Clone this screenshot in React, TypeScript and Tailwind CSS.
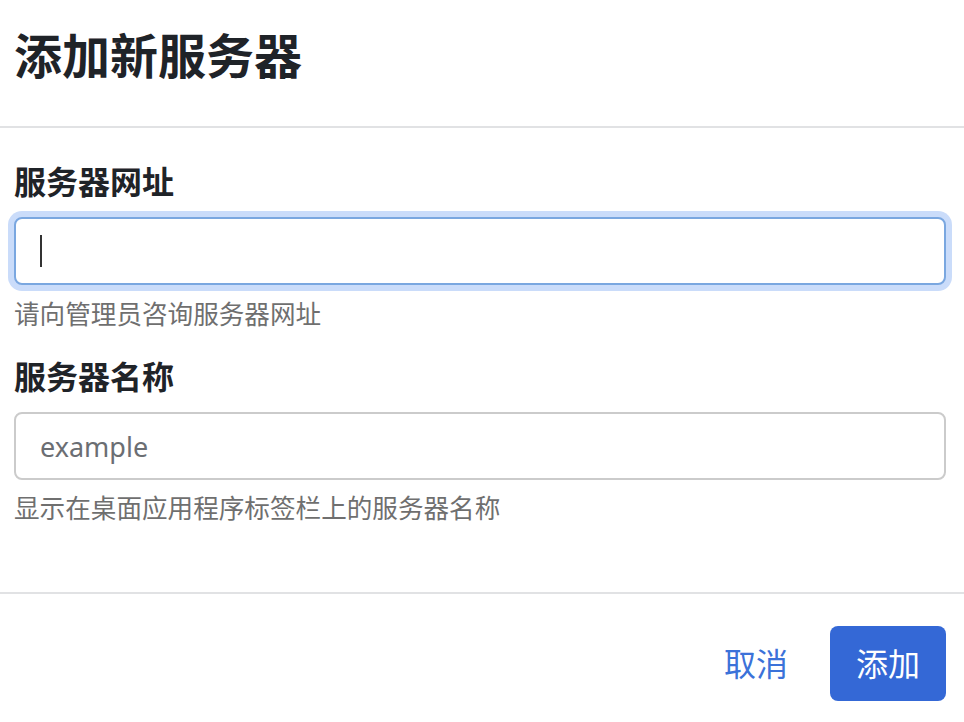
const fontStack = { fontFamily: '"Noto Sans", "Noto Sans CJK SC", sans-serif' };

const FieldLabel = ({ children }: { children: React.ReactNode }) => (
    <label className="block text-[32px] leading-[40px] font-bold text-[#1f2328]">{children}</label>
);

const HelpText = ({ children }: { children: React.ReactNode }) => (
    <p className="text-[25.6px] leading-[32px] text-[#6f6f6f]">{children}</p>
);

export default function App() {
    return (
        <div className="w-[964px] h-[722px] bg-white flex flex-col" style={fontStack}>
            {/* header */}
            <div className="px-[14px] pt-[27px] pb-[41px] border-b-2 border-[#e1e2e4]">
                <h1 className="text-[48px] leading-[58px] font-bold text-[#1f2328]">添加新服务器</h1>
            </div>

            {/* body */}
            <div className="pl-[14px] pr-[18px] pt-[34px] flex flex-col">
                <FieldLabel>服务器网址</FieldLabel>
                <div className="relative mt-[15px]">
                    <input
                        type="text"
                        className="w-full h-[68px] rounded-[8px] border-2 border-[#7aa7e0] ring-[6px] ring-[#cadcfa] outline-none pl-[24px] text-[27px] text-[#1f2328] bg-white"
                    />
                    <span className="absolute left-[26px] top-[18px] w-[2px] h-[32px] bg-[#333]" />
                </div>
                <div className="mt-[14px]">
                    <HelpText>请向管理员咨询服务器网址</HelpText>
                </div>

                <div className="mt-[26px]">
                    <FieldLabel>服务器名称</FieldLabel>
                </div>
                <input
                    type="text"
                    placeholder="example"
                    className="mt-[15px] w-full h-[68px] rounded-[8px] border-2 border-[#cbcbcb] outline-none pl-[24px] text-[27px] text-[#1f2328] placeholder:text-[#6b6e73] bg-white"
                />
                <div className="mt-[13px]">
                    <HelpText>显示在桌面应用程序标签栏上的服务器名称</HelpText>
                </div>
            </div>

            {/* footer */}
            <div className="mt-[67px] border-t-2 border-[#e1e2e4] px-[18px] pt-[32px] flex justify-end gap-[16px]">
                <button className="w-[116px] h-[75px] rounded-[8px] text-[32px] text-[#3b72d9] bg-transparent">
                    取消
                </button>
                <button className="w-[116px] h-[75px] rounded-[8px] text-[32px] text-white bg-[#3468d6]">
                    添加
                </button>
            </div>
        </div>
    );
}
